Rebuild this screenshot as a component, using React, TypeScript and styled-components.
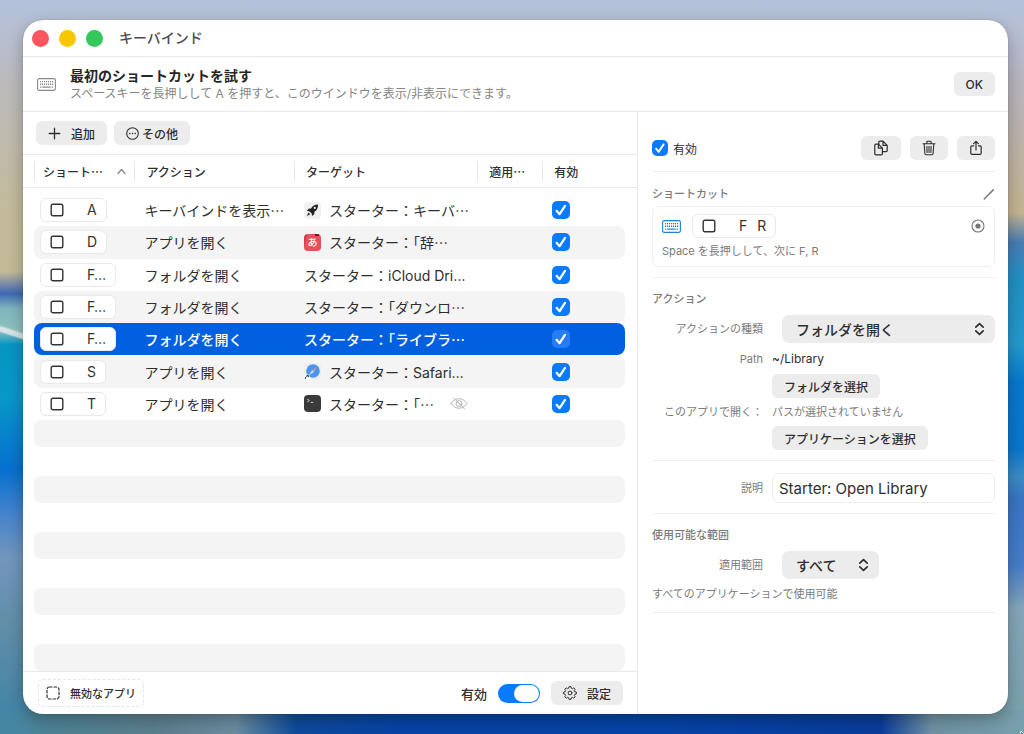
import React from "react";
import styled, { createGlobalStyle, css } from "styled-components";

const GlobalStyle = createGlobalStyle`
  *, *::before, *::after { box-sizing: border-box; }
  body { margin: 0; }
  body, button, input, select {
    font-family: Inter, "Noto Sans CJK JP", sans-serif;
    color: #2e2e2e;
  }
`;

const line = "#e9e9e9";
const blue = "#0a7aff";
const control = "#ececec";

const Desktop = styled.div`
  position: relative;
  overflow: hidden;
  min-height: 100vh;
  padding: 20px 16px 20px 23px;
  display: flex;
  background:
    linear-gradient(to bottom, #b3c2da 0, #b6bfd4 20px, rgba(182, 188, 206, 0) 80px) top / 100% 80px no-repeat,
    linear-gradient(to right, #4586a6 0, #4d8496 5%, #5c7f8d 15%, #6b8da0 23%, #3a6c9c 26%, #0f4a9c 29%, #0544a6 40%, #0544a8 65%, #0a3c9c 86%, #7093a3 91%, #78a0ac 100%) bottom / 100% 24px no-repeat,
    linear-gradient(198deg, transparent 38%, #d5e4e6 44%, #d5e4e6 54%, transparent 60%) 0 322px / 36px 26px no-repeat,
    linear-gradient(to bottom, #b9bfd2 0, #bcbab9 12%, #c2bb9c 28%, #c3ba96 37%, #3f68b4 40%, #7fb5bd 42%, #8ec1bd 45%, #0596c4 47%, #0898c8 54%, #0670d0 64%, #4683cc 70%, #7197bd 76%, #628ea8 85%, #4586a6 96%) left / 50% 100% no-repeat,
    linear-gradient(to bottom, #b5bcd4 0, #b9b4b8 14%, #c4b491 29%, #4a7cb4 33%, #2290c4 38%, #2499cc 47%, #0878cc 52%, #0a76ce 61%, #3c8cc4 65%, #3a74c4 68%, #477cc8 77%, #86a6b8 83%, #78a0ac 100%) right / 50% 100% no-repeat;
`;

const Window = styled.main`
  flex: 1;
  min-width: 0;
  display: flex;
  flex-direction: column;
  overflow: hidden;
  background: #fff;
  border-radius: 20px;
  box-shadow: 0 0 1px rgba(0, 0, 0, 0.4), 0 6px 16px rgba(0, 0, 0, 0.28);
`;

const TitleBar = styled.header`
  display: flex;
  align-items: center;
  gap: 10px;
  height: 37px;
  padding: 0 9px;
  border-bottom: 1px solid ${line};
`;

const Light = styled.button<{ $color: string }>`
  width: 17px;
  height: 17px;
  padding: 0;
  border: 0;
  border-radius: 50%;
  background: ${(p) => p.$color};
`;

const WindowTitle = styled.h1`
  margin: 0 0 0 6px;
  font-size: 14px;
  font-weight: 500;
  line-height: 20px;
  color: #4c4c4c;
`;

const Banner = styled.section`
  display: flex;
  align-items: center;
  gap: 14px;
  height: 55px;
  padding: 0 13px 0 14px;
  border-bottom: 1px solid ${line};
`;

const BannerText = styled.div`
  flex: 1;
  padding-top: 2px;
  h2, p { margin: 0; line-height: 18px; }
  h2 { font-size: 14px; font-weight: 700; color: #262626; }
  p { font-size: 12px; color: #858585; }
`;

const Button = styled.button<{ $gap?: number; $pad?: number }>`
  display: inline-flex;
  align-items: center;
  justify-content: center;
  gap: ${(p) => p.$gap ?? 8}px;
  height: 24px;
  padding: 0 ${(p) => p.$pad ?? 12}px;
  border: 0;
  border-radius: 6px;
  background: ${control};
  font-size: 12px;
  font-weight: 500;
  white-space: nowrap;
`;

const Body = styled.div`
  flex: 1;
  display: grid;
  grid-template-columns: minmax(0, 615fr) minmax(0, 370fr);
`;

const ListPane = styled.section`
  display: flex;
  flex-direction: column;
  border-right: 1px solid ${line};
`;

const Toolbar = styled.div`
  display: flex;
  align-items: center;
  gap: 7px;
  height: 43px;
  padding: 0 13px;
  border-bottom: 1px solid ${line};
`;

const Table = styled.table`
  width: 100%;
  height: 265px;
  padding: 0 12px 0 11px;
  table-layout: fixed;
  border-spacing: 0;
  background: linear-gradient(${line}, ${line}) 0 32px / 100% 1px no-repeat;
`;

const HeadCell = styled.th<{ $width?: string; $first?: boolean }>`
  width: ${(p) => p.$width ?? "auto"};
  height: 39px;
  padding: 6px 0 13px;
  vertical-align: top;
  text-align: left;
  font-size: 12px;
  font-weight: 500;
  white-space: nowrap;
  > div {
    display: flex;
    align-items: center;
    justify-content: space-between;
    height: 20px;
    padding: 0 8px 0 ${(p) => (p.$first ? 8 : 11)}px;
    border-left: 1px solid ${line};
  }
`;

type Tone = "plain" | "stripe" | "selected";

const Row = styled.tr<{ $tone: Tone }>`
  > td {
    height: 32px;
    padding: 0 0 0 10px;
    font-size: 14px;
    white-space: nowrap;
    background: ${(p) => ({ plain: "transparent", stripe: "#f4f4f4", selected: "#0060df" })[p.$tone]};
    ${(p) => p.$tone === "selected" && css`color: #fff; font-weight: 500;`}
  }
  > td:first-child { padding-left: 6px; border-radius: 8px 0 0 8px; }
  > td:last-child { border-radius: 0 8px 8px 0; }
`;

const Target = styled.div`
  display: flex;
  align-items: center;
  gap: 8px;
`;

const Muted = styled.span`
  display: flex;
  margin-left: 8px;
  color: #b5b5b5;
`;

const Dots = styled.span`
  font-family: "Noto Sans CJK JP", sans-serif;
`;

const KeyCap = styled.span`
  display: inline-flex;
  align-items: center;
  gap: 23px;
  height: 24px;
  padding: 0 9px;
  border: 1px solid #e9e9e9;
  border-radius: 6px;
  background: #fff;
  color: #333;
  font-size: 14px;
  font-weight: 400;
  line-height: 22px;
  vertical-align: middle;
`;

const Keys = styled.span`
  display: flex;
  gap: 10px;
`;

const Check = styled.input<{ $size?: number; $light?: boolean }>`
  appearance: none;
  flex: none;
  display: block;
  width: ${(p) => p.$size ?? 18}px;
  height: ${(p) => p.$size ?? 18}px;
  margin: 0;
  border-radius: 5px;
  background: ${(p) => (p.$light ? "#267cf5" : blue)};
  &:checked {
    background-image: url("data:image/svg+xml,%3Csvg xmlns='http://www.w3.org/2000/svg' viewBox='0 0 18 18' fill='none' stroke='white' stroke-width='2.2' stroke-linecap='round' stroke-linejoin='round'%3E%3Cpath d='M4.6 9.8 7.6 13.2 13 4.9'/%3E%3C/svg%3E");
    background-size: 100% 100%;
  }
`;

const Fillers = styled.div`
  flex: 1 1 0;
  min-height: 0;
  overflow: hidden;
  display: flex;
  flex-direction: column;
  gap: 29px;
  padding: 0 12px 0 11px;
`;

const Filler = styled.div`
  flex: none;
  height: 27px;
  border-radius: 8px;
  background: #f4f4f4;
`;

const Footer = styled.footer`
  display: flex;
  align-items: center;
  gap: 10px;
  height: 43px;
  padding: 0 14px 0 15px;
  border-top: 1px solid ${line};
`;

const DisabledApps = styled.button`
  display: flex;
  align-items: center;
  gap: 10px;
  height: 28px;
  margin-right: auto;
  padding: 0 7px;
  border: 1px dashed #e6e6e6;
  border-radius: 5px;
  background: none;
  font-size: 11px;
  font-weight: 500;
  white-space: nowrap;
`;

const SwitchLabel = styled.label`
  display: flex;
  align-items: center;
  gap: 11px;
  font-size: 13px;
  font-weight: 500;
`;

const Switch = styled.input`
  appearance: none;
  display: flex;
  justify-content: flex-end;
  width: 42px;
  height: 19px;
  margin: 0 1px 0 0;
  padding: 1px;
  border-radius: 10px;
  background: ${blue};
  &::before {
    content: "";
    width: 25px;
    height: 17px;
    border-radius: 9px;
    background: #fff;
  }
`;

const Inspector = styled.aside`
  padding: 0 13px 0 14px;
`;

const Group = styled.section<{ $top: number; $bottom: number }>`
  display: flex;
  flex-direction: column;
  padding: ${(p) => p.$top}px 0 ${(p) => p.$bottom}px;
  border-bottom: 1px solid #f1f1f1;
`;

const Line = styled.div<{ $gap?: number }>`
  display: flex;
  align-items: center;
  gap: ${(p) => p.$gap ?? 9}px;
`;

const EnabledLabel = styled.label`
  display: flex;
  align-items: center;
  gap: 5px;
  margin-right: auto;
  font-size: 12px;
`;

const SectionTitle = styled.h3`
  display: flex;
  align-items: center;
  justify-content: space-between;
  margin: 0;
  font-size: 11px;
  font-weight: 500;
  line-height: 16px;
  color: #7b7b7b;
`;

const Card = styled.div`
  height: 61px;
  margin-top: 4px;
  padding: 7px 9px 0;
  border: 1px solid #f0f0f0;
  border-radius: 7px;
`;

const RecordMark = styled.svg`
  margin-left: auto;
`;

const Note = styled.p<{ $top: number }>`
  margin: ${(p) => p.$top}px 0 0;
  font-size: 11px;
  line-height: 16px;
  color: #7b7b7b;
`;

const Form = styled.div<{ $top?: number }>`
  display: grid;
  grid-template-columns: 111px minmax(0, 1fr);
  column-gap: 9px;
  margin-top: ${(p) => p.$top ?? 0}px;
  align-items: center;
  justify-items: start;
  font-size: 11px;
  line-height: 16px;
  color: #7b7b7b;
  > button { grid-column: 2; }
`;

const FieldLabel = styled.label`
  justify-self: end;
  white-space: nowrap;
`;

const Value = styled.output<{ $dark?: boolean; $height: number }>`
  display: flex;
  align-items: center;
  height: ${(p) => p.$height}px;
  ${(p) => p.$dark && css`color: #2e2e2e; font-size: 12px;`}
`;

const SelectBox = styled.div<{ $full?: boolean }>`
  display: grid;
  align-items: center;
  width: ${(p) => (p.$full ? "calc(100% - 10px)" : "97px")};
  margin-left: 10px;
  color: #2e2e2e;
  > select, > svg { grid-area: 1 / 1; }
  > svg { justify-self: end; margin-right: 10px; pointer-events: none; }
  > select {
    appearance: none;
    width: 100%;
    height: 28px;
    padding: 0 14px;
    border: 0;
    border-radius: 7px;
    background: ${control};
    font-size: 14px;
    font-weight: 500;
  }
`;

const TextField = styled.input`
  width: 100%;
  height: 30px;
  padding: 0 6px;
  border: 1px solid #eeeeee;
  border-radius: 7px;
  font-size: 15px;
`;

const Pointer = styled.svg`
  position: absolute;
  right: -8px;
  bottom: -12px;
`;

/* Icons */

const Icon = ({ size = 16, w = 1.3, children, h }: { size?: number; h?: number; w?: number; children: React.ReactNode }) => (
  <svg width={size} height={h ?? size} viewBox={`0 0 ${size} ${h ?? size}`} fill="none" stroke="currentColor"
    strokeWidth={w} strokeLinecap="round" strokeLinejoin="round" aria-hidden="true">
    {children}
  </svg>
);

const Keyboard = ({ color }: { color: string }) => (
  <svg width="19" height="13" viewBox="0 0 19 13" fill="none" stroke={color} aria-hidden="true">
    <rect x="0.6" y="0.6" width="17.8" height="11.8" rx="1.6" strokeWidth="1.1" />
    <path d="M3 3.6h13.4M3 6.2h13.4" strokeWidth="1.4" strokeDasharray="1.2 0.8" />
    <path d="M3 9.2h1.3M5.2 9.2h8.4M14.6 9.2h1.4" strokeWidth="1.3" />
  </svg>
);

const SpaceKey = () => <Icon size={14} w={1.4}><rect x="1.2" y="1.2" width="11.6" height="11.6" rx="1.8" /></Icon>;

const Chevrons = () => (
  <Icon size={11} h={14} w={1.7}><path d="M1.8 5.2 5.5 1.6 9.2 5.2M1.8 8.8 5.5 12.4 9.2 8.8" /></Icon>
);

const RocketIcon = () => (
  <svg width="17" height="17" viewBox="0 0 17 17" aria-hidden="true">
    <rect width="17" height="17" rx="4" fill="#f1f1f1" />
    <path d="M14 2.6c-3.200 0-5.400 1.300-7 3.800L4.600 6.700 2.800 9l2.400.2 2.500 2.400.3 2.500 2.200-1.900.3-2.400C13 8.200 14.200 6 14 2.600Z" fill="#222" />
    <path d="M4.600 10.600 2.700 13.900 6.300 12.300Z" fill="#222" />
    <circle cx="10.800" cy="5.900" r="1.100" fill="#eee" />
  </svg>
);

const AppTile = styled.span`
  display: flex;
  align-items: center;
  justify-content: center;
  width: 17px;
  height: 17px;
  border-radius: 4px;
  background:
    linear-gradient(#5a1f26, #5a1f26) 11px 0 / 4px 2px no-repeat,
    linear-gradient(105deg, #cf3a49 12%, #e9505c 18%);
  color: #fff;
  font-size: 10px;
  line-height: 17px;
  font-weight: 500;
`;

const SafariIcon = () => (
  <svg width="17" height="17" viewBox="0 0 17 17" aria-hidden="true">
    <rect width="17" height="17" rx="4" fill="#eceef1" />
    <circle cx="9" cy="8" r="6.800" fill="#4a96ee" />
    <path d="M13 3.800 9.900 8.900 8.100 7.200Z" fill="#e98a94" />
    <path d="M5 12.200 8.100 7.200 9.900 8.900Z" fill="#cfe2fa" />
    <rect x="0" y="11.500" width="5.500" height="5.500" rx="1.200" fill="#fff" />
    <path d="M1.300 16c0-2 .8-2.800 2.300-2.800M2.600 12.300h1.700v1.800" fill="none" stroke="#333" strokeWidth="1" />
  </svg>
);

const TerminalIcon = () => (
  <svg width="17" height="17" viewBox="0 0 17 17" aria-hidden="true">
    <rect width="17" height="17" rx="4" fill="#3a3a3a" />
    <path d="M3.200 4 5.400 5.500 3.200 7M6.600 7.400h2.800" fill="none" stroke="#d8d8d8" strokeWidth="0.900" />
  </svg>
);

const EyeOff = () => (
  <Icon size={18} h={13} w={1}>
    <path d="M1 6.500C3 3.500 5.800 1.800 9 1.800s6 1.700 8 4.700c-2 3-4.800 4.700-8 4.700S3 9.500 1 6.500Z" />
    <circle cx="9" cy="6.500" r="2.900" /><path d="M3.800 1 14.600 12M7.600 5l3 3" />
  </Icon>
);

const icons = { rocket: <RocketIcon />, dictionary: <AppTile aria-hidden="true">あ</AppTile>, safari: <SafariIcon />, terminal: <TerminalIcon /> };

interface Shortcut {
  keys: string;
  action: string;
  cut?: boolean;
  icon?: keyof typeof icons;
  target: string;
  dots?: boolean;
  hidden?: boolean;
  tone: Tone;
}

const shortcuts: Shortcut[] = [
  { keys: "A", action: "キーバインドを表示", cut: true, icon: "rocket", target: "スターター：キーバ", dots: true, tone: "plain" },
  { keys: "D", action: "アプリを開く", icon: "dictionary", target: "スターター：「辞", dots: true, tone: "stripe" },
  { keys: "F…", action: "フォルダを開く", target: "スターター：iCloud Dri…", tone: "plain" },
  { keys: "F…", action: "フォルダを開く", target: "スターター：「ダウンロ", dots: true, tone: "stripe" },
  { keys: "F…", action: "フォルダを開く", target: "スターター：「ライブラ", dots: true, tone: "selected" },
  { keys: "S", action: "アプリを開く", icon: "safari", target: "スターター：Safari…", tone: "stripe" },
  { keys: "T", action: "アプリを開く", icon: "terminal", target: "スターター：「", dots: true, hidden: true, tone: "plain" },
];

const gear = Array.from({ length: 8 }, (_, i) => {
  const pt = (r: number, deg: number) => {
    const a = ((i * 45 + deg) * Math.PI) / 180;
    return `${(7 + r * Math.cos(a)).toFixed(2)} ${(7 + r * Math.sin(a)).toFixed(2)}`;
  };
  return `${i ? "L" : "M"}${pt(5, -15)}L${pt(6.4, -9)}L${pt(6.4, 9)}L${pt(5, 15)}`;
}).join("") + "Z";

export default function App() {
  return (
    <Desktop>
      <GlobalStyle />
      <Window>
        <TitleBar>
          <Light $color="#fb5560" aria-label="閉じる" />
          <Light $color="#f9c700" aria-label="しまう" />
          <Light $color="#34c759" aria-label="拡大" />
          <WindowTitle>キーバインド</WindowTitle>
        </TitleBar>

        <Banner>
          <Keyboard color="#8a8a8a" />
          <BannerText>
            <h2>最初のショートカットを試す</h2>
            <p>スペースキーを長押しして A を押すと、このウインドウを表示/非表示にできます。</p>
          </BannerText>
          <Button>OK</Button>
        </Banner>

        <Body>
          <ListPane>
            <Toolbar>
              <Button $gap={10}>
                <Icon size={13}><path d="M6.500 1.200v10.600M1.200 6.500h10.600" /></Icon>
                追加
              </Button>
              <Button $gap={3}>
                <Icon size={13} w={1.1}>
                  <circle cx="6.500" cy="6.500" r="5.800" />
                  <path d="M3.800 6.500h.01M6.500 6.500h.01M9.200 6.500h.01" strokeWidth="1.600" />
                </Icon>
                その他
              </Button>
            </Toolbar>

            <Table>
              <thead>
                <tr>
                  <HeadCell $width="17%" $first>
                    <div>
                      <span>ショート<Dots>…</Dots></span>
                      <Icon size={9} h={7} w={1.3}><path d="M1 5.500 4.500 1.500 8 5.500" stroke="#8a8a8a" /></Icon>
                    </div>
                  </HeadCell>
                  <HeadCell $width="27%"><div>アクション</div></HeadCell>
                  <HeadCell $width="31%"><div>ターゲット</div></HeadCell>
                  <HeadCell $width="11%"><div><span>適用<Dots>…</Dots></span></div></HeadCell>
                  <HeadCell><div>有効</div></HeadCell>
                </tr>
              </thead>
              <tbody>
                {shortcuts.map((s, i) => (
                  <Row key={i} $tone={s.tone}>
                    <td><KeyCap><SpaceKey />{s.keys}</KeyCap></td>
                    <td>{s.action}{s.cut && <Dots>…</Dots>}</td>
                    <td>
                      <Target>
                        {s.icon && icons[s.icon]}
                        <span>{s.target}{s.dots && <Dots>…</Dots>}</span>
                        {s.hidden && <Muted><EyeOff /></Muted>}
                      </Target>
                    </td>
                    <td />
                    <td><Check type="checkbox" defaultChecked $light={s.tone === "selected"} aria-label="有効" /></td>
                  </Row>
                ))}
              </tbody>
            </Table>

            <Fillers>
              {[0, 1, 2, 3, 4].map((n) => <Filler key={n} />)}
            </Fillers>

            <Footer>
              <DisabledApps>
                <Icon size={14} w={1.2}><rect x="1" y="1" width="12" height="12" rx="2.500" strokeDasharray="2.600 1.900" /></Icon>
                無効なアプリ
              </DisabledApps>
              <SwitchLabel>有効<Switch type="checkbox" role="switch" defaultChecked /></SwitchLabel>
              <Button $gap={10}>
                <Icon size={14} w={1}><path d={gear} /><circle cx="7" cy="7" r="1.900" /></Icon>
                設定
              </Button>
            </Footer>
          </ListPane>

          <Inspector>
            <Group $top={24} $bottom={11}>
              <Line>
                <EnabledLabel><Check type="checkbox" defaultChecked $size={16} />有効</EnabledLabel>
                <Button aria-label="複製">
                  <Icon w={1.2}>
                    <path d="M5.800 2.200c0-.6.400-1 1-1H10l4.200 4.200v5.200c0 .6-.4 1-1 1H6.800c-.6 0-1-.4-1-1ZM10 1.400v4h4" />
                    <path d="M2.800 4.200h2.600l4 4v5.600c0 .6-.4 1-1 1H2.800c-.6 0-1-.4-1-1V5.200c0-.6.400-1 1-1Z" fill={control} />
                    <path d="M5.400 4.400v3.800h3.800" />
                  </Icon>
                </Button>
                <Button aria-label="削除" $pad={11}>
                  <Icon w={1.1}>
                    <path d="M2 3.800h12M5.800 3.600V2.200c0-.6.400-1 1-1h2.400c.6 0 1 .4 1 1v1.400M3.200 4l.7 9.600c0 .7.500 1.200 1.200 1.200h5.800c.7 0 1.200-.5 1.200-1.200L12.800 4M5.900 6.200l.2 6.200M8 6.200v6.200M10.100 6.200l-.2 6.200" />
                  </Icon>
                </Button>
                <Button aria-label="共有" $pad={11}>
                  <Icon w={1.2}>
                    <path d="M5.600 5.800H4c-.7 0-1.200.5-1.200 1.200v6.200c0 .7.500 1.200 1.200 1.200h8c.7 0 1.200-.5 1.200-1.200V7c0-.7-.5-1.200-1.200-1.200h-1.600M8 10V1.400M5.600 3.700 8 1.300l2.400 2.400" />
                  </Icon>
                </Button>
              </Line>
            </Group>

            <Group $top={14} $bottom={10}>
              <SectionTitle>
                ショートカット
                <Icon size={12} w={1.6}><path d="M2.400 9.800 10.300 1.900M1.300 11 1.800 10.400" /></Icon>
              </SectionTitle>
              <Card>
                <Line $gap={11}>
                  <Keyboard color="#1c80e0" />
                  <KeyCap><SpaceKey /><Keys><span>F</span><span>R</span></Keys></KeyCap>
                  <RecordMark width="14" height="14" viewBox="0 0 14 14" fill="none" aria-hidden="true">
                    <circle cx="7" cy="7" r="6" stroke="#777" strokeWidth="1.100" />
                    <circle cx="7" cy="7" r="2.600" fill="#777" />
                  </RecordMark>
                </Line>
                <Note $top={5}>Space を長押しして、次に F, R</Note>
              </Card>
            </Group>

            <Group $top={13} $bottom={10}>
              <SectionTitle>アクション</SectionTitle>
              <Form $top={8}>
                <FieldLabel htmlFor="kind">アクションの種類</FieldLabel>
                <SelectBox $full>
                  <select id="kind"><option>フォルダを開く</option></select>
                  <Chevrons />
                </SelectBox>
                <FieldLabel htmlFor="path">Path</FieldLabel>
                <Value id="path" $dark $height={31}>~/Library</Value>
                <Button>フォルダを選択</Button>
                <FieldLabel htmlFor="opener">このアプリで開く：</FieldLabel>
                <Value id="opener" $height={28}>パスが選択されていません</Value>
                <Button>アプリケーションを選択</Button>
              </Form>
            </Group>

            <Group $top={12} $bottom={10}>
              <Form>
                <FieldLabel htmlFor="description">説明</FieldLabel>
                <TextField id="description" defaultValue="Starter: Open Library" />
              </Form>
            </Group>

            <Group $top={13} $bottom={10}>
              <SectionTitle>使用可能な範囲</SectionTitle>
              <Form $top={8}>
                <FieldLabel htmlFor="scope">適用範囲</FieldLabel>
                <SelectBox>
                  <select id="scope"><option>すべて</option></select>
                  <Chevrons />
                </SelectBox>
              </Form>
              <Note $top={7}>すべてのアプリケーションで使用可能</Note>
            </Group>
          </Inspector>
        </Body>
      </Window>
      <Pointer width="12" height="16" viewBox="0 0 12 16" aria-hidden="true">
        <path d="M1 1v12l3-3h5Z" fill="#000" stroke="#fff" />
      </Pointer>
    </Desktop>
  );
}
